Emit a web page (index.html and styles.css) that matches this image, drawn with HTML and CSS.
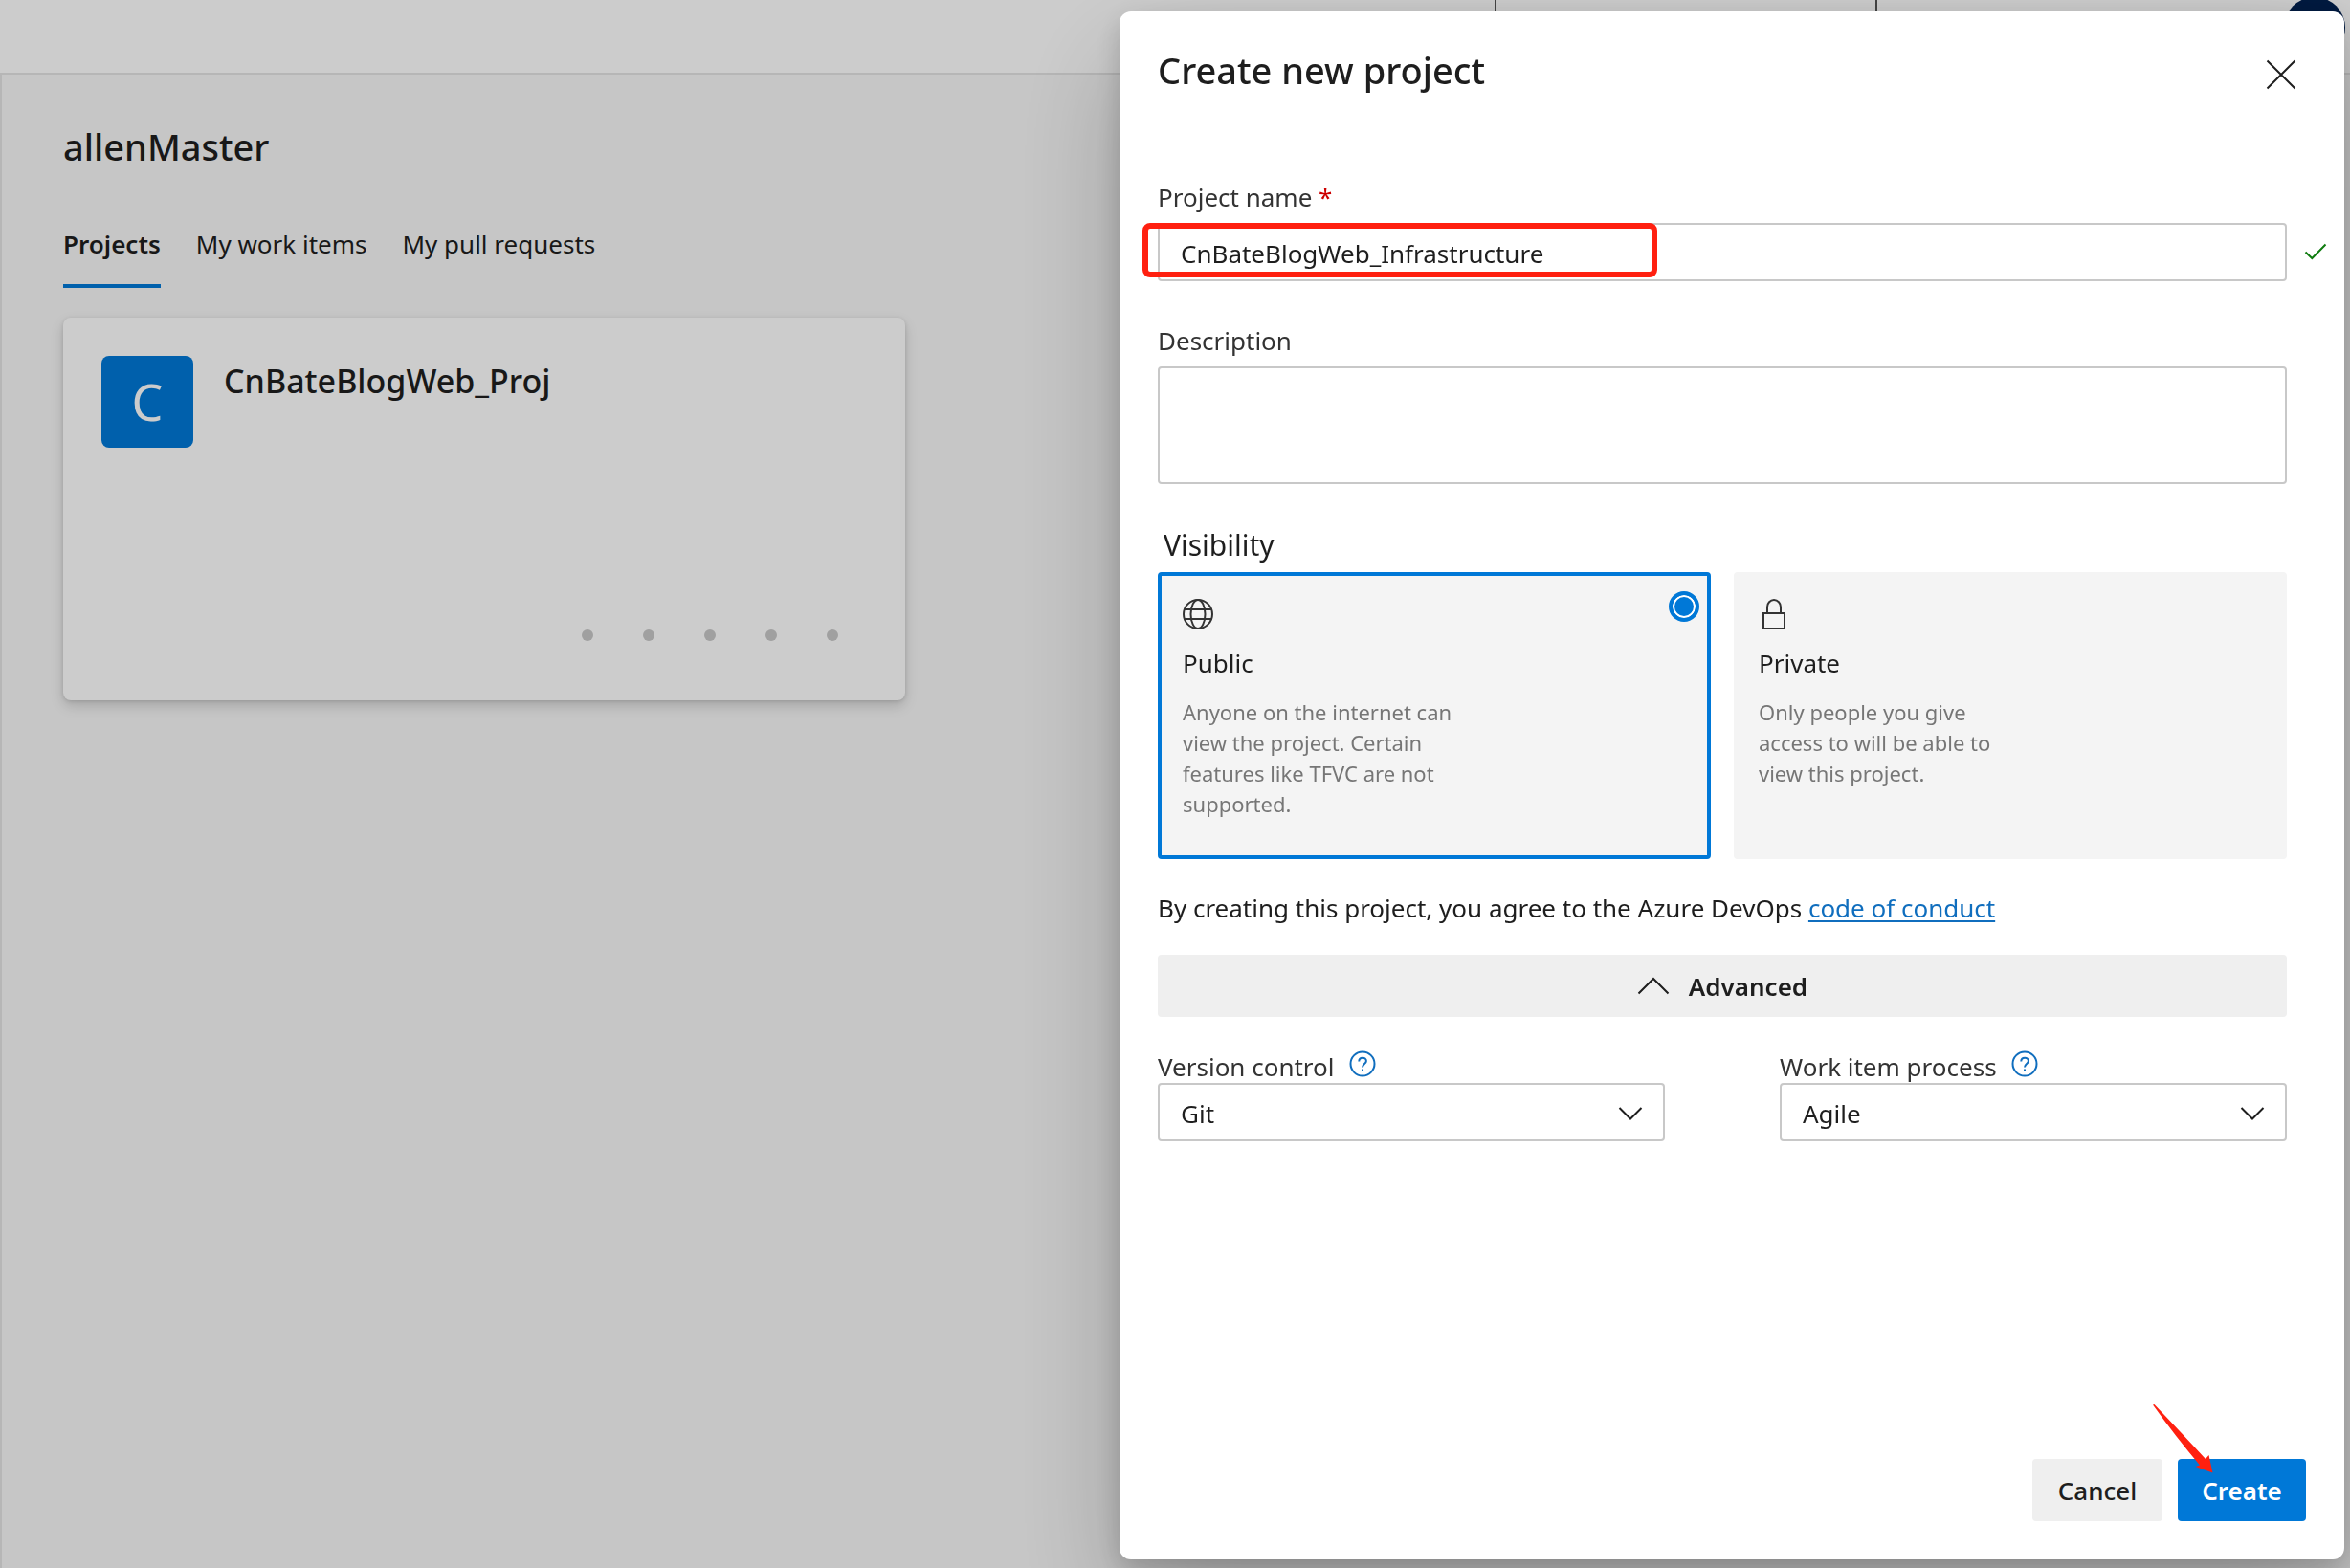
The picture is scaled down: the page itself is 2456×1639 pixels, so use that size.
FILE: index.html
```html
<!DOCTYPE html>
<html lang="en">
<head>
<meta charset="utf-8">
<meta name="viewport" content="width=device-width, initial-scale=1">
<title>Create new project</title>
<link rel="stylesheet" href="styles.css">
</head>
<body>
<div class="page">
  <header class="topbar">
    <div class="search"></div>
    <div class="avatar"></div>
  </header>
  <main class="hub">
    <h1 class="title">allenMaster</h1>
    <nav class="tabs">
      <a class="tab tab-active" href="#projects">Projects</a>
      <a class="tab" href="#work-items">My work items</a>
      <a class="tab" href="#pull-requests">My pull requests</a>
    </nav>
    <article class="project">
      <div class="project-head">
        <div class="project-logo">C</div>
        <h2 class="project-name">CnBateBlogWeb_Proj</h2>
      </div>
      <div class="dots"><i></i><i></i><i></i><i></i><i></i></div>
    </article>
  </main>
</div>

<div class="backdrop"></div>

<form class="dialog" role="dialog" aria-labelledby="dialog-title">
  <div class="dialog-head">
    <h2 class="title" id="dialog-title">Create new project</h2>
    <button class="close" type="button" aria-label="Close">
      <svg width="32" height="32" viewBox="0 0 32 32" fill="none" stroke="currentColor" stroke-width="2"><path d="M1.500 1.500L30.500 30.500M30.500 1.500L1.500 30.500"/></svg>
    </button>
  </div>

  <div class="dialog-body">
    <div class="field">
      <label class="label" for="name">Project name <span class="required">*</span></label>
      <div class="control">
        <input class="input" id="name" type="text" value="CnBateBlogWeb_Infrastructure">
        <div class="highlight"></div>
        <svg class="valid" width="24" height="18" viewBox="0 0 24 18" fill="none" stroke="#107c10" stroke-width="2"><path d="M1.500 9.500L8.300 16L22.500 1.500"/></svg>
      </div>
    </div>

    <div class="field">
      <label class="label" for="description">Description</label>
      <textarea class="input area" id="description"></textarea>
    </div>

    <fieldset class="visibility">
      <legend class="legend">Visibility</legend>
      <div class="options">
        <label class="option option-selected">
          <input class="radio" type="radio" name="visibility" checked>
          <svg width="32" height="32" viewBox="0 0 32 32" fill="none" stroke="#333" stroke-width="2"><circle cx="16" cy="16" r="15"/><ellipse cx="16" cy="16" rx="7.500" ry="15"/><path d="M2 11H30M2 21H30"/></svg>
          <span class="option-name">Public</span>
          <span class="option-text">Anyone on the internet can view the project. Certain features like TFVC are not supported.</span>
        </label>
        <label class="option">
          <input class="radio radio-hidden" type="radio" name="visibility">
          <svg width="32" height="32" viewBox="0 0 32 32" fill="none" stroke="#333" stroke-width="2"><path d="M5 15H27V31H5ZM9 15V8.500a7 7.500 0 0 1 14 0V15"/></svg>
          <span class="option-name">Private</span>
          <span class="option-text">Only people you give access to will be able to view this project.</span>
        </label>
      </div>
    </fieldset>

    <p class="terms">By creating this project, you agree to the Azure DevOps <a class="link" href="#conduct">code of conduct</a></p>

    <button class="button advanced" type="button">
      <svg width="34" height="20" viewBox="0 0 34 20" fill="none" stroke="currentColor" stroke-width="2"><path d="M1.500 17.500L17 2L32.500 17.500"/></svg>
      Advanced
    </button>

    <div class="selects">
      <div class="pick">
        <div class="pick-head">
          <label class="label" for="vcs">Version control</label>
          <svg class="help" width="28" height="28" viewBox="0 0 28 28" fill="none" stroke="currentColor" stroke-width="2"><circle cx="14" cy="14" r="12.500"/><path d="M10.300 11.500c0-5 7.600-5 7.600-.5 0 3-3.900 3.200-3.900 6.500"/><path d="M14 19.500V22"/></svg>
        </div>
        <div class="control">
          <select class="input" id="vcs"><option>Git</option></select>
          <svg class="chevron" width="26" height="16" viewBox="0 0 26 16" fill="none" stroke="currentColor" stroke-width="2"><path d="M1.500 2L13 13.500L24.500 2"/></svg>
        </div>
      </div>
      <div class="pick">
        <div class="pick-head">
          <label class="label" for="process">Work item process</label>
          <svg class="help" width="28" height="28" viewBox="0 0 28 28" fill="none" stroke="currentColor" stroke-width="2"><circle cx="14" cy="14" r="12.500"/><path d="M10.300 11.500c0-5 7.600-5 7.600-.5 0 3-3.900 3.200-3.900 6.500"/><path d="M14 19.500V22"/></svg>
        </div>
        <div class="control">
          <select class="input" id="process"><option>Agile</option></select>
          <svg class="chevron" width="26" height="16" viewBox="0 0 26 16" fill="none" stroke="currentColor" stroke-width="2"><path d="M1.500 2L13 13.500L24.500 2"/></svg>
        </div>
      </div>
    </div>
  </div>

  <div class="actions">
    <button class="button cancel" type="button">Cancel</button>
    <button class="button create" type="submit">Create
      <svg class="arrow" width="64" height="74" viewBox="0 0 64 74" fill="#ff2010"><path d="M0 .5L1.500 0Q32 32 55 57L58.500 53L62.500 71.500L44.500 65L49 63.500Q24 34 0 .5Z"/></svg>
    </button>
  </div>
</form>
</body>
</html>
```
FILE: styles.css
```css
* {
  box-sizing: border-box;
}

body {
  margin: 0;
  background: #f8f8f8;
  color: #1e1e1e;
  font: 26px/34px "Noto Sans", "Open Sans", sans-serif;
}

h1, h2, p {
  margin: 0;
}

svg {
  display: block;
  flex: none;
}

.title {
  font-size: 38px;
  line-height: 50px;
  font-weight: 500;
}

/* Page behind the dialog */
.page {
  min-height: 100vh;
  display: flex;
  flex-direction: column;
}

.topbar {
  height: 78px;
  padding: 0 5px 18px 0;
  display: flex;
  align-items: center;
  justify-content: flex-end;
  gap: 425px;
  overflow: hidden;
  background: #fff;
  border-bottom: 2px solid #e4e4e4;
}

.search {
  width: 400px;
  height: 64px;
  border: 2px solid #555;
}

.avatar {
  width: 64px;
  height: 64px;
  border-radius: 50%;
  background: #002050;
}

.hub {
  flex: 1;
  padding: 50px 64px;
  border-left: 2px solid #e4e4e4;
}

.tabs {
  display: flex;
  gap: 37px;
  margin: 60px 0 31px;
}

.tab {
  padding-bottom: 25px;
  border-bottom: 4px solid transparent;
  color: inherit;
  text-decoration: none;
}

.tab-active {
  border-color: #0078d7;
  font-weight: 600;
}

.project {
  max-width: 880px;
  min-height: 400px;
  padding: 40px 70px 62px 40px;
  display: flex;
  flex-direction: column;
  justify-content: space-between;
  background: #fff;
  border-radius: 8px;
  box-shadow: 0 6px 14px rgba(0, 0, 0, .16), 0 1px 4px rgba(0, 0, 0, .12);
}

.project-head {
  display: flex;
  gap: 32px;
}

.project-logo {
  width: 96px;
  height: 96px;
  border-radius: 8px;
  background: #0078d7;
  color: #fff;
  font-size: 52px;
  line-height: 96px;
  text-align: center;
}

.project-name {
  font-size: 34px;
  line-height: 52px;
  font-weight: 500;
}

.dots {
  display: flex;
  justify-content: flex-end;
  gap: 52px;
}

.dots i {
  width: 12px;
  height: 12px;
  border-radius: 50%;
  background: #c8c8c8;
}

.backdrop {
  position: fixed;
  inset: 0;
  background: rgba(0, 0, 0, .2);
}

/* Dialog */
.dialog {
  position: fixed;
  inset: 12px 6px 9px auto;
  width: 1280px;
  max-width: calc(100% - 12px);
  padding: 36px 40px 40px;
  display: flex;
  flex-direction: column;
  background: #fff;
  border-radius: 12px;
  box-shadow: 0 51px 115px rgba(0, 0, 0, .22), 0 10px 29px rgba(0, 0, 0, .18);
}

.dialog-head {
  display: flex;
  align-items: flex-start;
  justify-content: space-between;
  padding-right: 10px;
  margin-bottom: 89px;
}

.close {
  height: 60px;
  margin-bottom: -8px;
  padding: 0;
  display: flex;
  align-items: center;
  border: 0;
  background: none;
  color: #1e1e1e;
}

.dialog-body {
  padding-right: 20px;
}

.field {
  margin-bottom: 45px;
}

.label {
  display: block;
  color: #333;
}

.field .label {
  margin-bottom: 10px;
}

.required {
  color: #cd0000;
}

.control {
  position: relative;
}

.input {
  display: block;
  width: 100%;
  height: 61px;
  margin: 0;
  padding: 2px 22px 0;
  border: 2px solid #c8c8c8;
  border-radius: 4px;
  background: #fff;
  color: #1e1e1e;
  font: inherit;
  appearance: none;
}

.area {
  height: 123px;
  resize: none;
}

.highlight {
  position: absolute;
  top: 0;
  left: -16px;
  width: 538px;
  height: 57px;
  border: 6px solid #ff2010;
  border-radius: 8px;
}

.valid {
  position: absolute;
  left: calc(100% + 18px);
  top: 21px;
}

.visibility {
  margin: -5px 0 0;
  padding: 0;
  border: 0;
}

.legend {
  padding: 0 0 4px 6px;
  font-size: 30px;
  line-height: 48px;
}

.options {
  display: grid;
  grid-template-columns: 1fr 1fr;
  gap: 24px;
}

.option {
  position: relative;
  min-height: 300px;
  padding: 24px 22px;
  display: flex;
  flex-direction: column;
  gap: 18px;
  border: 4px solid #f4f4f4;
  border-radius: 4px;
  background: #f4f4f4;
}

.option-selected {
  border-color: #0078d7;
}

.option-text {
  max-width: 285px;
  color: #767676;
  font-size: 22px;
  line-height: 32px;
}

.radio {
  position: absolute;
  top: 16px;
  right: 8px;
  width: 32px;
  height: 32px;
  margin: 0;
  appearance: none;
  border: 4px solid #0078d7;
  border-radius: 50%;
  background: #0078d7;
  box-shadow: inset 0 0 0 2px #fff;
}

.radio-hidden {
  opacity: 0;
}

.terms {
  margin: 34px 0 32px;
}

.link {
  color: #106ebe;
  text-decoration-thickness: 2px;
  text-underline-offset: 3px;
  text-decoration-skip-ink: none;
}

.button {
  height: 65px;
  border: 0;
  border-radius: 4px;
  background: #efefef;
  color: #1e1e1e;
  font: inherit;
  font-weight: 600;
}

.advanced {
  width: 100%;
  display: flex;
  align-items: center;
  justify-content: center;
  gap: 20px;
}

.selects {
  display: grid;
  grid-template-columns: 1fr 1fr;
  gap: 120px;
  margin-top: 35px;
}

.pick-head {
  display: flex;
  gap: 15px;
}

.help {
  color: #106ebe;
}

.chevron {
  position: absolute;
  right: 23px;
  top: 24px;
  pointer-events: none;
}

.actions {
  margin-top: auto;
  display: flex;
  justify-content: flex-end;
  gap: 16px;
}

.cancel {
  width: 136px;
  padding: 0;
  font-weight: 500;
}

.create {
  position: relative;
  width: 134px;
  padding: 0;
  background: #0078d7;
  color: #fff;
}

.arrow {
  position: absolute;
  left: -26px;
  bottom: 48px;
}
```
